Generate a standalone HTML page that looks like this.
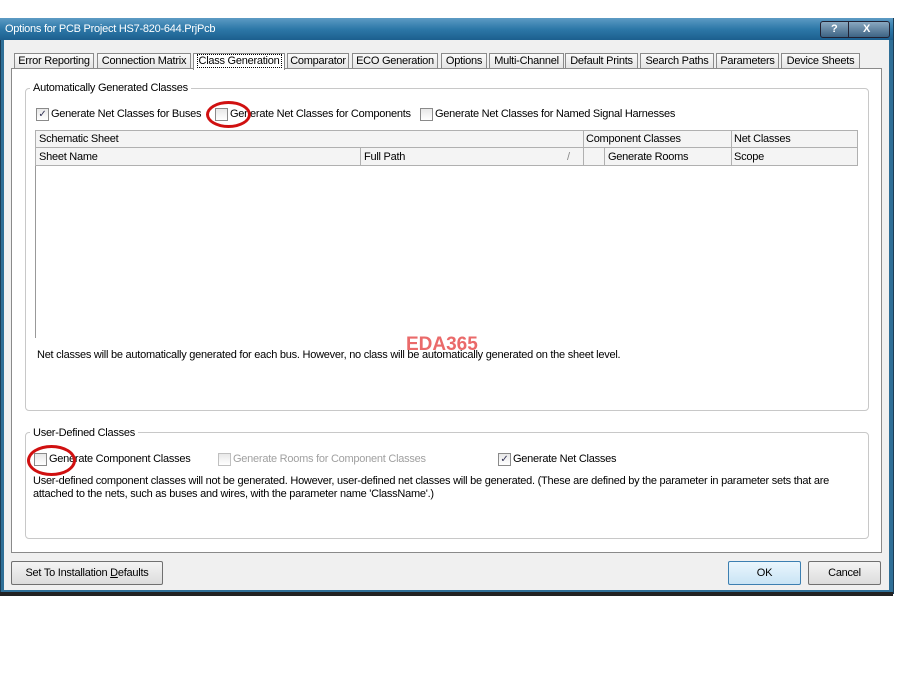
<!DOCTYPE html>
<html><head><style>
body{margin:0;width:898px;height:687px;background:#fff;position:relative;overflow:hidden;font-family:"Liberation Sans",sans-serif;font-size:11px;color:#000;letter-spacing:-0.25px}
.a{position:absolute}
.win{left:0;top:18px;width:892px;height:574px;background:#2f6f97;border:1px solid #1b3d56}
.title{left:0;top:18px;width:893px;height:22px;background:linear-gradient(#5d9bc4,#2d78a8 50%,#1c5f8e);color:#fff}
.body{left:4px;top:40px;width:885px;height:550px;background:#f0f0f0}
.tab{top:53px;height:15px;border:1px solid #8a8a8a;border-bottom:none;background:linear-gradient(#fafafa,#e4e4e4);line-height:15px;white-space:nowrap;box-sizing:border-box;text-align:center}
.panel{left:11px;top:68px;width:869px;height:483px;background:#fff;border:1px solid #8a8a8a}
.grp{border:1px solid #c8c8c8;border-radius:4px}
.lbl{background:#fff;padding:0 3px}
.cb{width:11px;height:11px;border:1px solid #8a8a8a;background:linear-gradient(#e8e8e8,#fff)}
.ring{border:3px solid #d01010;border-radius:50%}
.btn{border:1px solid #707070;border-radius:2px;background:linear-gradient(#f4f4f4,#dcdcdc);text-align:center;line-height:22px}
</style></head><body>
<div class="a win"></div>
<div class="a title"><span class="a" style="left:5px;top:5px">Options for PCB Project HS7-820-644.PrjPcb</span>
<div class="a" style="left:820px;top:3px;width:68px;height:15px;border:1px solid #223;border-radius:3px;background:linear-gradient(#8aa8c0,#3e6484);color:#fff;font-weight:bold;font-size:11px"><span class="a" style="left:10px;top:1px">?</span><span class="a" style="left:27px;top:0;width:1px;height:15px;background:#223"></span><span class="a" style="left:42px;top:1px">X</span></div></div>
<div class="a body"></div>
<div class="a panel"></div>
<div class="a tab" style="left:14px;width:80px">Error Reporting</div>
<div class="a tab" style="left:97px;width:94px">Connection Matrix</div>
<div class="a tab" style="left:193px;top:53px;height:17px;width:92px;background:#fff;line-height:15px"><span style="border:1px dotted #000;padding:0 1px">Class Generation</span></div>
<div class="a tab" style="left:287px;width:62px">Comparator</div>
<div class="a tab" style="left:352px;width:86px">ECO Generation</div>
<div class="a tab" style="left:441px;width:46px">Options</div>
<div class="a tab" style="left:489px;width:75px">Multi-Channel</div>
<div class="a tab" style="left:565px;width:73px">Default Prints</div>
<div class="a tab" style="left:640px;width:74px">Search Paths</div>
<div class="a tab" style="left:716px;width:63px">Parameters</div>
<div class="a tab" style="left:781px;width:79px">Device Sheets</div>

<div class="a grp" style="left:25px;top:88px;width:842px;height:321px"></div>
<span class="a lbl" style="left:30px;top:82px">Automatically Generated Classes</span>
<div class="a cb" style="left:36px;top:108px;font-size:10px;line-height:11px;text-align:center;color:#335">✓</div>
<span class="a" style="left:51px;top:108px">Generate Net Classes for Buses</span>
<div class="a cb" style="left:215px;top:108px"></div>
<span class="a" style="left:230px;top:108px">Generate Net Classes for Components</span>
<div class="a cb" style="left:420px;top:108px"></div>
<span class="a" style="left:435px;top:108px">Generate Net Classes for Named Signal Harnesses</span>
<div class="a ring" style="left:206px;top:101px;width:39px;height:21px"></div>

<div class="a" style="left:35px;top:130px;width:821px;height:208px;border-left:1px solid #999;background:#fff"></div>
<div class="a" style="left:35px;top:130px;width:821px;height:34px;border:1px solid #b0b0b0;background:#f4f4f4"></div>
<div class="a" style="left:35px;top:147px;width:822px;height:1px;background:#b0b0b0"></div>
<div class="a" style="left:583px;top:130px;width:1px;height:17px;background:#b0b0b0"></div>
<div class="a" style="left:731px;top:130px;width:1px;height:35px;background:#b0b0b0"></div>
<div class="a" style="left:360px;top:148px;width:1px;height:17px;background:#b0b0b0"></div>
<div class="a" style="left:583px;top:148px;width:1px;height:17px;background:#b0b0b0"></div>
<div class="a" style="left:604px;top:148px;width:1px;height:17px;background:#b0b0b0"></div>
<span class="a" style="left:39px;top:133px">Schematic Sheet</span>
<span class="a" style="left:586px;top:133px">Component Classes</span>
<span class="a" style="left:734px;top:133px">Net Classes</span>
<span class="a" style="left:39px;top:151px">Sheet Name</span>
<span class="a" style="left:364px;top:151px">Full Path</span>
<span class="a" style="left:567px;top:151px;color:#888">/</span>
<span class="a" style="left:608px;top:151px">Generate Rooms</span>
<span class="a" style="left:734px;top:151px">Scope</span>
<span class="a" style="left:37px;top:349px">Net classes will be automatically generated for each bus. However, no class will be automatically generated on the sheet level.</span>
<span class="a" style="left:406px;top:334px;color:#e85a5a;font-weight:bold;font-size:19px;letter-spacing:0;opacity:.9">EDA365</span>

<div class="a grp" style="left:25px;top:432px;width:842px;height:105px"></div>
<span class="a lbl" style="left:30px;top:427px">User-Defined Classes</span>
<div class="a cb" style="left:34px;top:453px"></div>
<span class="a" style="left:49px;top:453px">Generate Component Classes</span>
<div class="a ring" style="left:27px;top:445px;width:43px;height:25px"></div>
<div class="a cb" style="left:218px;top:453px;border-color:#c0c0c0"></div>
<span class="a" style="left:233px;top:453px;color:#a0a0a0">Generate Rooms for Component Classes</span>
<div class="a cb" style="left:498px;top:453px;font-size:10px;line-height:11px;text-align:center;color:#335">✓</div>
<span class="a" style="left:513px;top:453px">Generate Net Classes</span>
<span class="a" style="left:33px;top:475px;width:830px;line-height:13px">User-defined component classes will not be generated. However, user-defined net classes will be generated. (These are defined by the parameter in parameter sets that are attached to the nets, such as buses and wires, with the parameter name 'ClassName'.)</span>

<div class="a btn" style="left:11px;top:561px;width:150px;height:22px">Set To Installation <u>D</u>efaults</div>
<div class="a btn" style="left:728px;top:561px;width:71px;height:22px;border-color:#3c7fb1;background:linear-gradient(#eaf6fd,#c9e4f5)">OK</div>
<div class="a btn" style="left:808px;top:561px;width:71px;height:22px">Cancel</div>
<div class="a" style="left:0;top:592px;width:893px;height:4px;background:#222"></div>
</body></html>
